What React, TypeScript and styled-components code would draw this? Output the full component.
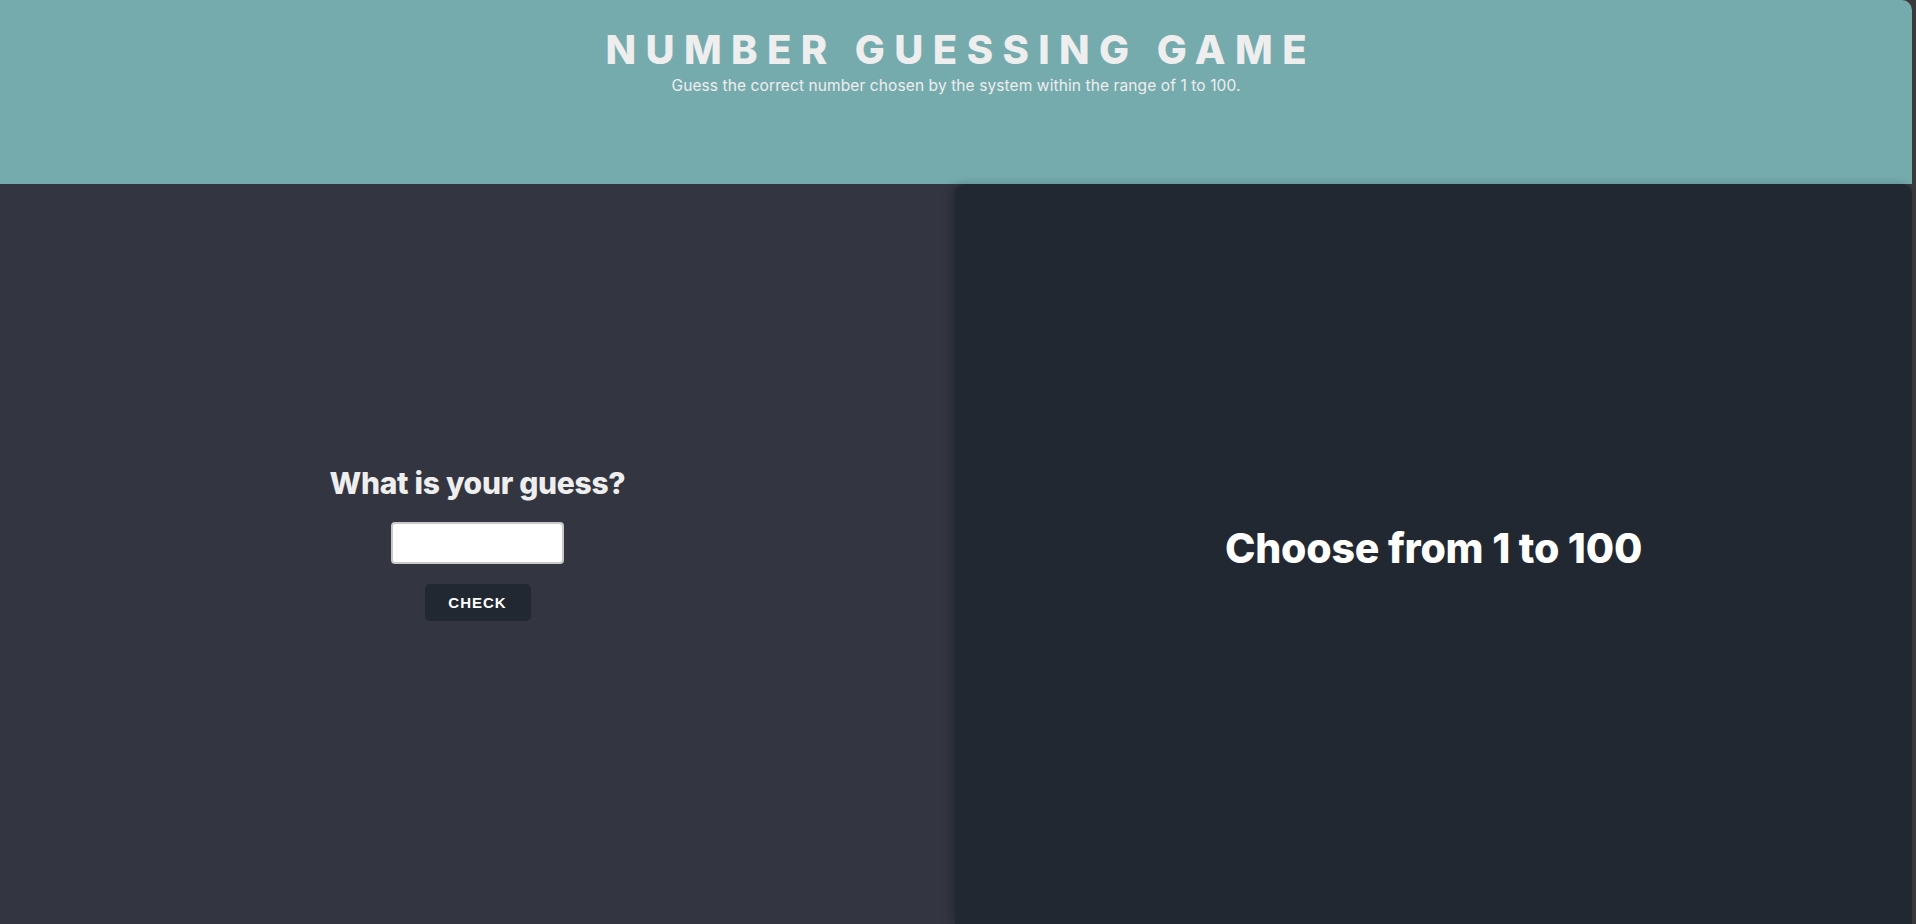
import React from "react";
import styled, { createGlobalStyle } from "styled-components";

const Global = createGlobalStyle`
  html, body { margin: 0; padding: 0; background: #3a3a3a; }
  body { font-family: "Inter", "Liberation Sans", sans-serif; overflow: hidden; }
  * { box-sizing: border-box; }
`;

const Page = styled.div`
  display: flex;
  flex-direction: column;
  height: 924px;
  padding-right: 4px;
`;

const Header = styled.header`
  height: 184px;
  flex: none;
  background: #76abae;
  border-top-right-radius: 10px;
  display: flex;
  flex-direction: column;
  align-items: center;
  padding-top: 26px;
  color: #eeeeee;
`;

const Title = styled.h1`
  margin: 0;
  font-family: "Inter", sans-serif;
  font-weight: 800;
  font-size: 40px;
  line-height: 48px;
  letter-spacing: 9.4px;
  margin-right: -9.4px;
`;

const Subtitle = styled.p`
  margin: 2px 0 0;
  font-family: "Inter", sans-serif;
  font-size: 15.5px;
  line-height: 20px;
  letter-spacing: 0.1px;
`;

const Main = styled.main`
  flex: 1;
  display: grid;
  grid-template-columns: 955px 1fr;
  background: #333640;
`;

const LeftPanel = styled.section`
  display: flex;
  flex-direction: column;
  align-items: center;
  justify-content: center;
  padding-bottom: 22px;
`;

const RightPanel = styled.section`
  background: #222831;
  border-radius: 10px 10px 0 0;
  box-shadow: -4px 0 10px rgba(0, 0, 0, 0.22);
  display: flex;
  align-items: center;
  justify-content: center;
  padding-bottom: 12px;
`;

const Question = styled.h2`
  margin: 0;
  font-family: "Inter", sans-serif;
  font-weight: 800;
  font-size: 30px;
  line-height: 36px;
  color: #eeeeee;
  letter-spacing: -0.3px;
`;

const GuessInput = styled.input`
  margin-top: 21px;
  width: 173px;
  height: 42px;
  border: 2px solid #c9c9c9;
  border-radius: 4px;
  background: #ffffff;
  outline: none;
  font-size: 18px;
  text-align: center;
`;

const CheckButton = styled.button`
  margin-top: 20px;
  width: 106px;
  height: 37px;
  border: none;
  border-radius: 5px;
  background: #222831;
  color: #ffffff;
  font-family: "Liberation Sans", Arial, sans-serif;
  font-weight: 700;
  font-size: 15px;
  letter-spacing: 1px;
  cursor: pointer;
`;

const Result = styled.h2`
  margin: 0;
  font-family: "Inter", sans-serif;
  font-weight: 800;
  font-size: 41px;
  line-height: 48px;
  color: #ffffff;
  letter-spacing: -0.2px;
`;

export default function App() {
  return (
    <>
      <Global />
      <Page>
        <Header>
          <Title>NUMBER GUESSING GAME</Title>
          <Subtitle>Guess the correct number chosen by the system within the range of 1 to 100.</Subtitle>
        </Header>
        <Main>
          <LeftPanel>
            <Question>What is your guess?</Question>
            <GuessInput type="number" aria-label="Your guess" />
            <CheckButton>CHECK</CheckButton>
          </LeftPanel>
          <RightPanel>
            <Result>Choose from 1 to 100</Result>
          </RightPanel>
        </Main>
      </Page>
    </>
  );
}
